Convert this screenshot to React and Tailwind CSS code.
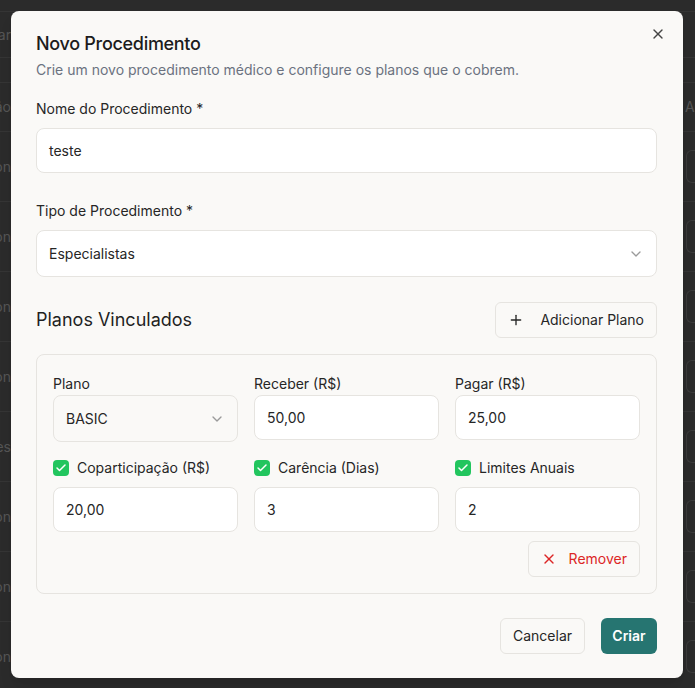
import React from "react";

const ChevronDown = ({ className = "" }) => (
  <svg className={className} width="16" height="16" viewBox="0 0 24 24" fill="none" stroke="currentColor" strokeWidth="2" strokeLinecap="round" strokeLinejoin="round">
    <path d="m6 9 6 6 6-6" />
  </svg>
);

const XIcon = ({ className = "", size = 16 }) => (
  <svg className={className} width={size} height={size} viewBox="0 0 24 24" fill="none" stroke="currentColor" strokeWidth="2" strokeLinecap="round" strokeLinejoin="round">
    <path d="M18 6 6 18" />
    <path d="m6 6 12 12" />
  </svg>
);

const PlusIcon = ({ className = "" }) => (
  <svg className={className} width="16" height="16" viewBox="0 0 24 24" fill="none" stroke="currentColor" strokeWidth="2" strokeLinecap="round" strokeLinejoin="round">
    <path d="M5 12h14" />
    <path d="M12 5v14" />
  </svg>
);

const Check = () => (
  <span className="flex h-4 w-4 shrink-0 items-center justify-center rounded-[4px] bg-[#22c55e] text-white">
    <svg width="12" height="12" viewBox="0 0 24 24" fill="none" stroke="currentColor" strokeWidth="3" strokeLinecap="round" strokeLinejoin="round">
      <path d="M20 6 9 17l-5-5" />
    </svg>
  </span>
);

const Input = ({ value }) => (
  <div className="flex h-[45px] items-center rounded-lg border border-[#e6e4e0] bg-white px-3 text-sm text-[#262626]">
    {value}
  </div>
);

const rowTexts = ["Consultation", "Avaliation", "Observation", "Consultation", "Exames", "Consultation", "Consultation", "Consultation"];

export default function App() {
  return (
    <div
      className="relative h-[688px] w-full overflow-hidden bg-[#2b2b2b] text-sm"
      style={{ fontFamily: "Inter, 'Noto Sans', sans-serif" }}
    >
      {/* Background page (dimmed) */}
      <div className="h-[12px] border-b border-[#353535]" />
      <div className="flex h-[46px] items-center border-b border-[#353535]">
        <div className="flex w-[11px] shrink-0 justify-end overflow-hidden text-[#555]">
          <span className="whitespace-nowrap">Procurar</span>
        </div>
      </div>
      <div className="h-[25px] border-b border-[#353535]" />
      <div className="flex h-[49px] items-center justify-between border-b border-[#353535] text-[#555]">
        <div className="flex w-[11px] shrink-0 justify-end overflow-hidden">
          <span className="whitespace-nowrap">Descrição</span>
        </div>
        <div className="w-[10px] overflow-hidden whitespace-nowrap">Ações</div>
      </div>
      {rowTexts.map((t, i) => (
        <div key={i} className="flex h-[70px] items-center justify-between border-b border-[#353535] text-[#555]">
          <div className="flex w-[11px] shrink-0 justify-end overflow-hidden">
            <span className="whitespace-nowrap">{t}</span>
          </div>
          <div className="h-[33px] w-[9px] rounded-l-md border border-r-0 border-[#3c3c3c]" />
        </div>
      ))}

      {/* Modal */}
      <div className="absolute left-[11px] top-[11px] w-[672px] rounded-lg bg-[#faf9f7] pb-6 pl-[25px] pr-[26px] pt-6 shadow-lg">
        <button className="absolute right-[17px] top-[15px] text-[#444]">
          <XIcon />
        </button>

        <h2 className="text-lg font-medium leading-none tracking-[-0.3px] text-[#1c1c1c]">Novo Procedimento</h2>
        <p className="mt-[7px] text-sm leading-5 text-[#6b7280]">
          Crie um novo procedimento médico e configure os planos que o cobrem.
        </p>

        <label className="mt-[19px] block h-5 text-sm font-normal leading-5 text-[#262626]">Nome do Procedimento *</label>
        <div className="mt-[9px]">
          <Input value="teste" />
        </div>

        <label className="mt-[28px] block h-5 text-sm font-normal leading-5 text-[#262626]">Tipo de Procedimento *</label>
        <div className="mt-[9px] flex h-[47px] items-center justify-between rounded-lg border border-[#e6e4e0] bg-white px-3 text-sm text-[#262626]">
          <span>Especialistas</span>
          <ChevronDown className="text-[#9a9a9a]" />
        </div>

        <div className="mt-[25px] flex h-9 items-center justify-between">
          <h3 className="text-lg font-normal text-[#1f1f1f]">Planos Vinculados</h3>
          <button className="flex h-9 items-center gap-4 rounded-md border border-[#e6e4e0] bg-[#faf9f7] px-3 text-sm font-normal text-[#262626]">
            <PlusIcon />
            Adicionar Plano
          </button>
        </div>

        <div className="mt-4 rounded-lg border border-[#e6e4e0] px-4 pb-4 pt-[19px]">
          <div className="grid grid-cols-3 items-start gap-x-4">
            <div>
              <div className="h-5 text-sm font-normal leading-5 text-[#262626]">Plano</div>
              <div className="mt-px flex h-[47px] items-center justify-between rounded-lg border border-[#e6e4e0] bg-[#faf9f7] px-3 text-sm text-[#262626]">
                <span>BASIC</span>
                <ChevronDown className="text-[#9a9a9a]" />
              </div>
            </div>
            <div>
              <div className="h-5 text-sm font-normal leading-5 text-[#262626]">Receber (R$)</div>
              <div className="mt-px">
                <Input value="50,00" />
              </div>
            </div>
            <div>
              <div className="h-5 text-sm font-normal leading-5 text-[#262626]">Pagar (R$)</div>
              <div className="mt-px">
                <Input value="25,00" />
              </div>
            </div>

            {[
              ["Coparticipação (R$)", "20,00"],
              ["Carência (Dias)", "3"],
              ["Limites Anuais", "2"],
            ].map(([label, val]) => (
              <div key={label} className="mt-4">
                <div className="flex h-5 items-center gap-2 text-sm font-normal text-[#262626]">
                  <Check />
                  <span>{label}</span>
                </div>
                <div className="mt-[9px]">
                  <Input value={val} />
                </div>
              </div>
            ))}
          </div>
          <div className="mt-[9px] flex justify-end">
            <button className="flex h-9 items-center gap-3 rounded-md border border-[#e6e4e0] bg-[#faf9f7] px-3 text-sm font-normal text-[#dc2626]">
              <XIcon />
              Remover
            </button>
          </div>
        </div>

        <div className="mt-6 flex justify-end gap-4">
          <button className="flex h-9 w-[85px] items-center justify-center rounded-md border border-[#e6e4e0] bg-[#faf9f7] text-sm font-normal text-[#262626]">
            Cancelar
          </button>
          <button className="flex h-9 w-[56px] items-center justify-center rounded-md bg-[#267571] text-sm font-semibold text-white">
            Criar
          </button>
        </div>
      </div>
    </div>
  );
}
